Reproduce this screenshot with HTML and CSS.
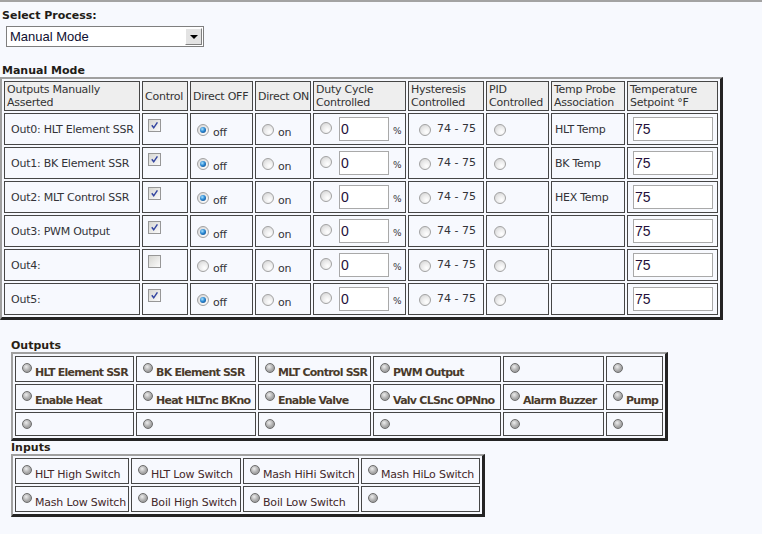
FILE: index.html
```html
<!DOCTYPE html>
<html lang="en">
<head>
<meta charset="utf-8">
<title>Manual Mode</title>
<link rel="stylesheet" href="styles.css">
</head>
<body>
<div class="page">
  <div class="heading proc">Select Process:</div>
  <div class="select">
    <span class="select-value">Manual Mode</span>
    <span class="select-btn"><span class="select-arrow"></span></span>
  </div>

  <div class="heading mode">Manual Mode</div>
  <table class="grid manual">
    <thead>
      <tr>
        <th class="w-out">Outputs Manually<br>Asserted</th>
        <th class="w-ctl">Control</th>
        <th class="w-off">Direct OFF</th>
        <th class="w-on">Direct ON</th>
        <th class="w-duty">Duty Cycle<br>Controlled</th>
        <th class="w-hys">Hysteresis<br>Controlled</th>
        <th class="w-pid">PID<br>Controlled</th>
        <th class="w-probe">Temp Probe<br>Association</th>
        <th class="w-set">Temperature<br>Setpoint °F</th>
      </tr>
    </thead>
    <tbody>
      <tr>
        <td class="name">Out0: HLT Element SSR</td>
        <td class="ctl"><span class="check"><svg width="11" height="11" viewBox="0 0 11 11"><path d="M2.8 5.3 L4.7 7.8 L8.4 2.4" fill="none" stroke="#3446a0" stroke-width="1.5"/></svg></span></td>
        <td class="dir"><div class="rl"><span class="radio on"></span><span class="rlabel">off</span></div></td>
        <td class="dir"><div class="rl"><span class="radio"></span><span class="rlabel">on</span></div></td>
        <td class="duty"><div class="dc"><span class="radio"></span><input class="num" type="text" value="0"><span class="pct">%</span></div></td>
        <td class="hys"><div class="rl"><span class="radio"></span><span class="range">74 - 75</span></div></td>
        <td class="pid"><span class="radio"></span></td>
        <td class="probe">HLT Temp</td>
        <td class="set"><input class="num wide" type="text" value="75"></td>
      </tr>
      <tr>
        <td class="name">Out1: BK Element SSR</td>
        <td class="ctl"><span class="check"><svg width="11" height="11" viewBox="0 0 11 11"><path d="M2.8 5.3 L4.7 7.8 L8.4 2.4" fill="none" stroke="#3446a0" stroke-width="1.5"/></svg></span></td>
        <td class="dir"><div class="rl"><span class="radio on"></span><span class="rlabel">off</span></div></td>
        <td class="dir"><div class="rl"><span class="radio"></span><span class="rlabel">on</span></div></td>
        <td class="duty"><div class="dc"><span class="radio"></span><input class="num" type="text" value="0"><span class="pct">%</span></div></td>
        <td class="hys"><div class="rl"><span class="radio"></span><span class="range">74 - 75</span></div></td>
        <td class="pid"><span class="radio"></span></td>
        <td class="probe">BK Temp</td>
        <td class="set"><input class="num wide" type="text" value="75"></td>
      </tr>
      <tr>
        <td class="name">Out2: MLT Control SSR</td>
        <td class="ctl"><span class="check"><svg width="11" height="11" viewBox="0 0 11 11"><path d="M2.8 5.3 L4.7 7.8 L8.4 2.4" fill="none" stroke="#3446a0" stroke-width="1.5"/></svg></span></td>
        <td class="dir"><div class="rl"><span class="radio on"></span><span class="rlabel">off</span></div></td>
        <td class="dir"><div class="rl"><span class="radio"></span><span class="rlabel">on</span></div></td>
        <td class="duty"><div class="dc"><span class="radio"></span><input class="num" type="text" value="0"><span class="pct">%</span></div></td>
        <td class="hys"><div class="rl"><span class="radio"></span><span class="range">74 - 75</span></div></td>
        <td class="pid"><span class="radio"></span></td>
        <td class="probe">HEX Temp</td>
        <td class="set"><input class="num wide" type="text" value="75"></td>
      </tr>
      <tr>
        <td class="name">Out3: PWM Output</td>
        <td class="ctl"><span class="check"><svg width="11" height="11" viewBox="0 0 11 11"><path d="M2.8 5.3 L4.7 7.8 L8.4 2.4" fill="none" stroke="#3446a0" stroke-width="1.5"/></svg></span></td>
        <td class="dir"><div class="rl"><span class="radio on"></span><span class="rlabel">off</span></div></td>
        <td class="dir"><div class="rl"><span class="radio"></span><span class="rlabel">on</span></div></td>
        <td class="duty"><div class="dc"><span class="radio"></span><input class="num" type="text" value="0"><span class="pct">%</span></div></td>
        <td class="hys"><div class="rl"><span class="radio"></span><span class="range">74 - 75</span></div></td>
        <td class="pid"><span class="radio"></span></td>
        <td class="probe"></td>
        <td class="set"><input class="num wide" type="text" value="75"></td>
      </tr>
      <tr>
        <td class="name">Out4:</td>
        <td class="ctl"><span class="check"></span></td>
        <td class="dir"><div class="rl"><span class="radio"></span><span class="rlabel">off</span></div></td>
        <td class="dir"><div class="rl"><span class="radio"></span><span class="rlabel">on</span></div></td>
        <td class="duty"><div class="dc"><span class="radio"></span><input class="num" type="text" value="0"><span class="pct">%</span></div></td>
        <td class="hys"><div class="rl"><span class="radio"></span><span class="range">74 - 75</span></div></td>
        <td class="pid"><span class="radio"></span></td>
        <td class="probe"></td>
        <td class="set"><input class="num wide" type="text" value="75"></td>
      </tr>
      <tr>
        <td class="name">Out5:</td>
        <td class="ctl"><span class="check"><svg width="11" height="11" viewBox="0 0 11 11"><path d="M2.8 5.3 L4.7 7.8 L8.4 2.4" fill="none" stroke="#3446a0" stroke-width="1.5"/></svg></span></td>
        <td class="dir"><div class="rl"><span class="radio on"></span><span class="rlabel">off</span></div></td>
        <td class="dir"><div class="rl"><span class="radio"></span><span class="rlabel">on</span></div></td>
        <td class="duty"><div class="dc"><span class="radio"></span><input class="num" type="text" value="0"><span class="pct">%</span></div></td>
        <td class="hys"><div class="rl"><span class="radio"></span><span class="range">74 - 75</span></div></td>
        <td class="pid"><span class="radio"></span></td>
        <td class="probe"></td>
        <td class="set"><input class="num wide" type="text" value="75"></td>
      </tr>
    </tbody>
  </table>

  <div class="heading io-head outputs-head">Outputs</div>
  <table class="grid io outputs">
    <tr>
      <td class="o1"><div class="rl"><span class="led"></span><span class="lbl">HLT Element SSR</span></div></td>
      <td class="o2"><div class="rl"><span class="led"></span><span class="lbl">BK Element SSR</span></div></td>
      <td class="o3"><div class="rl"><span class="led"></span><span class="lbl">MLT Control SSR</span></div></td>
      <td class="o4"><div class="rl"><span class="led"></span><span class="lbl">PWM Output</span></div></td>
      <td class="o5"><div class="rl"><span class="led"></span></div></td>
      <td class="o6"><div class="rl"><span class="led"></span></div></td>
    </tr>
    <tr>
      <td><div class="rl"><span class="led"></span><span class="lbl">Enable Heat</span></div></td>
      <td><div class="rl"><span class="led"></span><span class="lbl">Heat HLTnc BKno</span></div></td>
      <td><div class="rl"><span class="led"></span><span class="lbl">Enable Valve</span></div></td>
      <td><div class="rl"><span class="led"></span><span class="lbl">Valv CLSnc OPNno</span></div></td>
      <td><div class="rl"><span class="led"></span><span class="lbl">Alarm Buzzer</span></div></td>
      <td><div class="rl"><span class="led"></span><span class="lbl">Pump</span></div></td>
    </tr>
    <tr class="blank">
      <td><div class="rl"><span class="led"></span></div></td>
      <td><div class="rl"><span class="led"></span></div></td>
      <td><div class="rl"><span class="led"></span></div></td>
      <td><div class="rl"><span class="led"></span></div></td>
      <td><div class="rl"><span class="led"></span></div></td>
      <td><div class="rl"><span class="led"></span></div></td>
    </tr>
  </table>

  <div class="heading io-head inputs-head">Inputs</div>
  <table class="grid io inputs">
    <tr>
      <td class="i1"><div class="rl"><span class="led"></span><span class="lbl">HLT High Switch</span></div></td>
      <td class="i2"><div class="rl"><span class="led"></span><span class="lbl">HLT Low Switch</span></div></td>
      <td class="i3"><div class="rl"><span class="led"></span><span class="lbl">Mash HiHi Switch</span></div></td>
      <td class="i4"><div class="rl"><span class="led"></span><span class="lbl">Mash HiLo Switch</span></div></td>
    </tr>
    <tr>
      <td><div class="rl"><span class="led"></span><span class="lbl">Mash Low Switch</span></div></td>
      <td><div class="rl"><span class="led"></span><span class="lbl">Boil High Switch</span></div></td>
      <td><div class="rl"><span class="led"></span><span class="lbl">Boil Low Switch</span></div></td>
      <td><div class="rl"><span class="led"></span></div></td>
    </tr>
  </table>
</div>
</body>
</html>
```

FILE: styles.css
```css
* { box-sizing: border-box; }
html, body { margin: 0; padding: 0; }
body {
  background: #f7f9fe;
  font-family: Verdana, "DejaVu Sans", sans-serif;
  font-size: 11px;
  color: #333338;
}
.page {
  border-top: 2px solid #a3a3a3;
  padding-top: 7px;
  min-height: 532px;
}
.heading { font-weight: bold; line-height: 13px; color: #221c18; }
.proc { margin-left: 2px; }
.mode { margin: 17px 0 0 2px; }

/* fake select */
.select {
  margin: 4px 0 0 6px;
  width: 198px;
  height: 21px;
  border: 1px solid #7f7f7f;
  background: #fff;
  display: flex;
  align-items: center;
  justify-content: space-between;
  padding: 0 1px 0 3px;
}
.select-value {
  font-family: "Liberation Sans", Arial, sans-serif;
  font-size: 13px;
  color: #0e0e30;
}
.select-btn {
  width: 17px;
  height: 17px;
  background: #e3e3e3;
  border: 1px solid;
  border-color: #ffffff #808080 #808080 #ffffff;
  display: flex;
  align-items: center;
  justify-content: center;
}
.select-arrow {
  width: 0; height: 0;
  border-left: 4px solid transparent;
  border-right: 4px solid transparent;
  border-top: 4px solid #000;
  margin-top: 1px;
}

/* tables */
.grid {
  border-collapse: separate;
  border-spacing: 2px;
  border-style: solid;
  border-width: 2px 3px 3px 2px;
  border-color: #a0a0a0 #242424 #242424 #a0a0a0;
  table-layout: fixed;
}
.grid th, .grid td {
  border: 1px solid #464646;
  padding: 0;
}
.manual { width: 723px; letter-spacing: -0.25px; }
.manual thead tr { height: 30px; }
.manual tbody tr { height: 32px; }
.manual th {
  background: #eeeeee;
  font-weight: normal;
  text-align: left;
  vertical-align: middle;
  padding: 0 0 0 2px;
  line-height: 13px;
  white-space: nowrap;
  color: #333333;
}
.w-out { width: 136px; }
.w-ctl { width: 46px; }
.w-off { width: 63px; }
.w-on { width: 56px; }
.w-duty { width: 93px; }
.w-hys { width: 76px; }
.w-pid { width: 63px; }
.w-probe { width: 74px; }
.w-set { width: 91px; }

.manual td { vertical-align: top; white-space: nowrap; }
.manual td.name, .manual td.probe { vertical-align: middle; line-height: 13px; }
.manual td.name { padding-left: 6px; }
.manual td.probe { padding-left: 3px; }
.manual td.ctl { padding: 5px 0 0 5px; }
.manual td.dir { padding: 10px 0 0 6px; }
.manual td.duty { padding: 3px 0 0 6px; }
.manual td.hys { padding: 10px 0 0 10px; }
.manual td.pid { padding: 10px 0 0 7px; }
.manual td.set { padding: 3px 0 0 5px; }

.rl, .dc { display: flex; align-items: flex-start; }
.rlabel { margin: 2px 0 0 4px; line-height: 13px; }
.range { margin: -2px 0 0 6px; line-height: 13px; letter-spacing: 0; }
.dc .radio { margin-top: 5px; }
.dc .num { margin-left: 7px; }
.pct { font-size: 9px; line-height: 12px; margin: 8px 0 0 4px; letter-spacing: 0; }

.radio {
  display: block;
  flex: none;
  position: relative;
  width: 12px;
  height: 12px;
  border-radius: 50%;
  border: 1px solid #a2a2a2;
  background: radial-gradient(circle at 65% 70%, #ffffff 0, #ececec 45%, #cdcdcd 100%);
}
.radio.on::after {
  content: "";
  position: absolute;
  left: 2px; top: 2px;
  width: 6px; height: 6px;
  border-radius: 50%;
  background: radial-gradient(circle at 38% 35%, #a8e2ff 0, #2b88d2 45%, #0b3b78 100%);
}
.check {
  display: block;
  width: 13px;
  height: 13px;
  border: 1px solid #979797;
  background: linear-gradient(135deg, #d6d6d2, #fbfbfb);
}
.check svg { display: block; }

.num {
  display: block;
  width: 50px;
  height: 24px;
  margin: 0;
  border: 1px solid #a9a9a9;
  background: #fff;
  padding: 0 1px;
  font-family: "Liberation Sans", Arial, sans-serif;
  font-size: 14px;
  letter-spacing: 0;
  color: #24103a;
  outline: none;
}
.num.wide { width: 80px; }

/* outputs / inputs */
.io-head { color: #2a1f14; }
.outputs-head { margin: 19px 0 0 11px; }
.inputs-head { margin: 0 0 0 11px; }
.io { margin-left: 11px; }
.io tr { height: 26px; }
.io tr.blank { height: 24px; }
.io td { vertical-align: top; padding: 6px 0 0 6px; white-space: nowrap; overflow: hidden; }
.outputs { width: 657px; }
.inputs { width: 474px; }
.o1 { width: 119px; }
.o2 { width: 120px; }
.o3 { width: 113px; }
.o4 { width: 128px; }
.o5 { width: 101px; }
.o6 { width: 57px; }
.i1 { width: 114px; }
.i2 { width: 110px; }
.i3 { width: 116px; }
.i4 { width: 119px; }

.led {
  display: block;
  flex: none;
  width: 10px;
  height: 10px;
  border-radius: 50%;
  border: 1px solid #6c6c6c;
  background: radial-gradient(circle at 40% 35%, #ececec 0, #ababab 55%, #8c8c8c 100%);
}
.lbl { margin: 3px 0 0 3px; line-height: 13px; }
.outputs .lbl { font-weight: bold; color: #4a3b2c; letter-spacing: -0.75px; }
.inputs .lbl { color: #44282a; letter-spacing: -0.2px; }
```
